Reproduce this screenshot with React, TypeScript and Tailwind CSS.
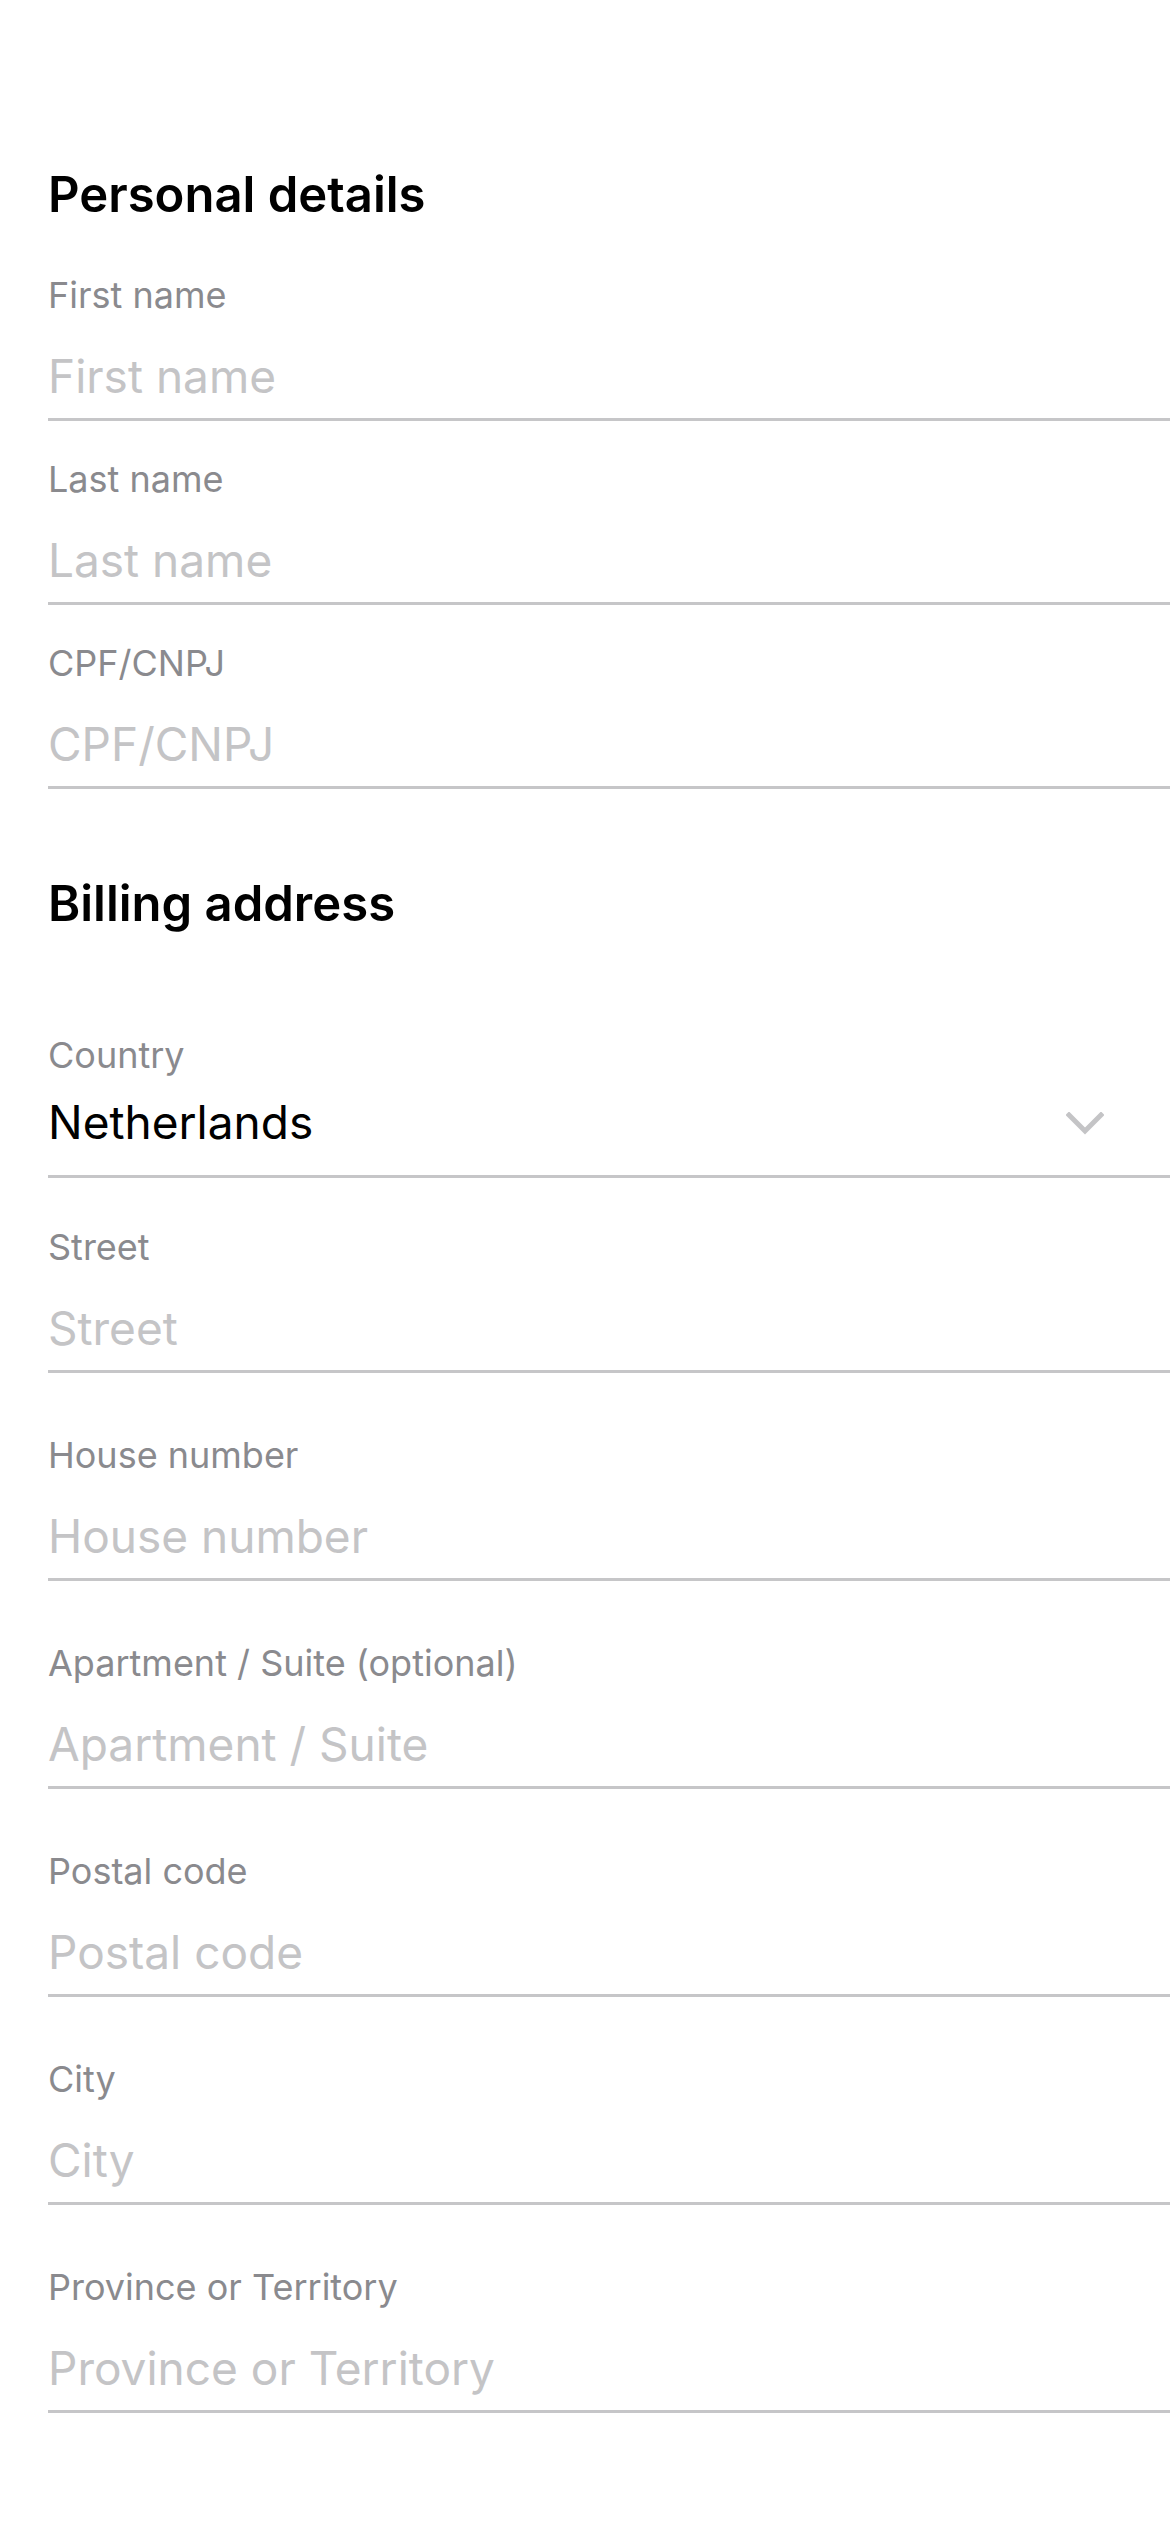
import { useState } from "react";

type Field = { key: string; label: string; placeholder: string };

const personal: Field[] = [
  { key: "firstName", label: "First name", placeholder: "First name" },
  { key: "lastName", label: "Last name", placeholder: "Last name" },
  { key: "cpf", label: "CPF/CNPJ", placeholder: "CPF/CNPJ" },
];

const billing: Field[] = [
  { key: "street", label: "Street", placeholder: "Street" },
  { key: "house", label: "House number", placeholder: "House number" },
  { key: "apt", label: "Apartment / Suite (optional)", placeholder: "Apartment / Suite" },
  { key: "postal", label: "Postal code", placeholder: "Postal code" },
  { key: "city", label: "City", placeholder: "City" },
  { key: "province", label: "Province or Territory", placeholder: "Province or Territory" },
];

function TextField({
  field,
  value,
  onChange,
}: {
  field: Field;
  value: string;
  onChange: (v: string) => void;
}) {
  return (
    <label className="block pb-[12px] border-b-[3px] border-[#c6c6c8]">
      <span className="block h-[48px] leading-[48px] text-[36px] text-[#8a8a8e]">
        {field.label}
      </span>
      <input
        type="text"
        value={value}
        onChange={(e) => onChange(e.target.value)}
        placeholder={field.placeholder}
        className="mt-[27px] block w-full h-[60px] leading-[60px] text-[46px] text-black bg-transparent outline-none placeholder:text-[#c4c4c6]"
        autoComplete="off"
      />
    </label>
  );
}

export default function App() {
  const [values, setValues] = useState<Record<string, string>>({});
  const set = (k: string) => (v: string) => setValues({ ...values, [k]: v });

  return (
    <div className="min-h-screen bg-white pl-[48px] pt-[163px] pb-[120px] font-['Inter','Noto_Sans',sans-serif]">
      <h2 className="h-[64px] leading-[64px] text-[49px] font-semibold text-black">
        Personal details
      </h2>
      <div className="mt-[44px] flex flex-col gap-[34px]">
        {personal.map((f) => (
          <TextField key={f.key} field={f} value={values[f.key] ?? ""} onChange={set(f.key)} />
        ))}
      </div>

      <h2 className="mt-[83px] h-[64px] leading-[64px] text-[49px] font-semibold text-black">
        Billing address
      </h2>

      <div className="mt-[95px] pb-[23px] border-b-[3px] border-[#c6c6c8]">
        <span className="block h-[48px] leading-[48px] text-[36px] text-[#8a8a8e]">Country</span>
        <div className="mt-[13px] h-[60px] flex items-center justify-between pr-[66px]">
          <span className="text-[46px] text-black">Netherlands</span>
          <svg width="38" height="24" viewBox="0 0 38 24" fill="none" className="mt-[3px]">
            <path d="M3 3 L19 19 L35 3" stroke="#c4c4c6" strokeWidth="5" strokeLinecap="square" />
          </svg>
        </div>
      </div>

      <div className="mt-[45px] flex flex-col gap-[58px]">
        {billing.map((f) => (
          <TextField key={f.key} field={f} value={values[f.key] ?? ""} onChange={set(f.key)} />
        ))}
      </div>
    </div>
  );
}
